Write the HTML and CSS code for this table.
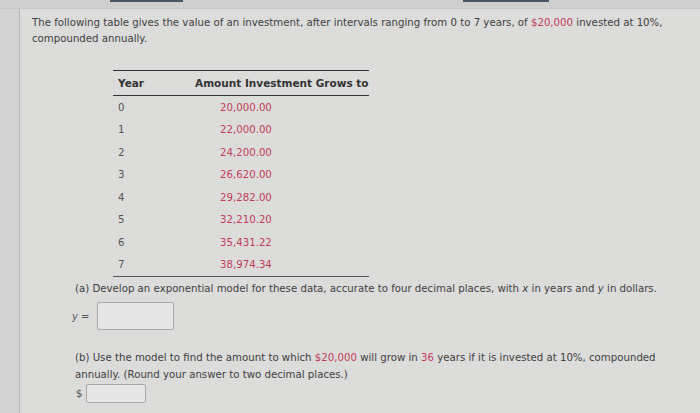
FILE: index.html
```html
<!DOCTYPE html>
<html>
<head>
<meta charset="utf-8">
<link rel="stylesheet" href="styles.css">
</head>
<body>
<div class="topbar">
  <span class="tab tab1"></span>
  <span class="tab tab2"></span>
</div>
<div class="page">
  <div class="gutter"></div>
  <div class="content">
    <p class="intro">The following table gives the value of an investment, after intervals ranging from 0 to 7 years, of <span class="red">$20,000</span> invested at 10%, compounded annually.</p>
    <table class="data">
      <thead>
        <tr><th class="c-year">Year</th><th class="c-amt">Amount Investment Grows to</th></tr>
      </thead>
      <tbody>
        <tr><td class="c-year">0</td><td class="c-amt red">20,000.00</td></tr>
        <tr><td class="c-year">1</td><td class="c-amt red">22,000.00</td></tr>
        <tr><td class="c-year">2</td><td class="c-amt red">24,200.00</td></tr>
        <tr><td class="c-year">3</td><td class="c-amt red">26,620.00</td></tr>
        <tr><td class="c-year">4</td><td class="c-amt red">29,282.00</td></tr>
        <tr><td class="c-year">5</td><td class="c-amt red">32,210.20</td></tr>
        <tr><td class="c-year">6</td><td class="c-amt red">35,431.22</td></tr>
        <tr><td class="c-year">7</td><td class="c-amt red">38,974.34</td></tr>
      </tbody>
    </table>
    <div class="part">
      <p class="q">(a) Develop an exponential model for these data, accurate to four decimal places, with <i>x</i> in years and <i>y</i> in dollars.</p>
      <div class="answer a1"><span class="lbl"><i>y</i> =</span><span class="box box1"></span></div>
    </div>
    <div class="part partb">
      <p class="q">(b) Use the model to find the amount to which <span class="red">$20,000</span> will grow in <span class="red">36</span> years if it is invested at 10%, compounded annually. (Round your answer to two decimal places.)</p>
      <div class="answer a2"><span class="lbl">$</span><span class="box box2"></span></div>
    </div>
  </div>
</div>
</body>
</html>
```
FILE: styles.css
```css
html, body {
  margin: 0;
  padding: 0;
}
body {
  width: 700px;
  height: 413px;
  overflow: hidden;
  background: #dcdcdb;
  font-family: "DejaVu Sans", Verdana, sans-serif;
  font-size: 10.2px;
  color: #3e3e3e;
}
.topbar {
  height: 8px;
  background: #cfcfcf;
  position: relative;
  border-bottom: 1px solid #c6c6c6;
}
.tab {
  position: absolute;
  top: 0;
  height: 2px;
  background: #4a5566;
}
.tab1 { left: 110px; width: 73px; }
.tab2 { left: 463px; width: 86px; }
.page {
  display: flex;
  height: 404px;
}
.gutter {
  width: 19px;
  background: #d2d2d2;
  border-right: 1px solid #b5b5b5;
}
.content {
  flex: 1;
  padding: 6px 0 0 12px;
}
.intro {
  margin: 0;
  line-height: 16px;
  width: 650px;
}
.red { color: #c23d57; }
.data {
  border-collapse: collapse;
  margin: 23px 0 0 81px;
  width: 256px;
  border-top: 1px solid #333;
  border-bottom: 1px solid #555;
}
.data th {
  font-weight: bold;
  text-align: left;
  height: 24px;
  padding: 0;
  border-bottom: 1px solid #333;
  color: #333;
  font-size: 10.5px;
}
.data td {
  height: 22.5px;
  padding: 0;
}
.c-year { padding-left: 5px !important; width: 77px; }
.data td.c-year { color: #555; }
.data th.c-amt { padding-left: 0; }
.data td.c-amt { padding-left: 25px; }
.q {
  margin: 0;
  line-height: 17px;
}
.part {
  margin-left: 43px;
  margin-top: 3px;
}
.partb {
  margin-top: 19px;
  width: 600px;
}
.answer {
  display: flex;
  align-items: center;
}
.lbl { font-size: 10px; color: #555; }
.a1 { margin-top: 5px; margin-left: -3px; }
.a1 .lbl { width: 25px; }
.box {
  display: inline-block;
  background: #e6e6e6;
  border: 1px solid #a8a8a8;
  border-radius: 2px;
}
.box1 { width: 75px; height: 26px; }
.a2 { margin-top: 1px; margin-left: 1px; }
.a2 .lbl { width: 10px; }
.box2 { width: 58px; height: 17px; }
```
